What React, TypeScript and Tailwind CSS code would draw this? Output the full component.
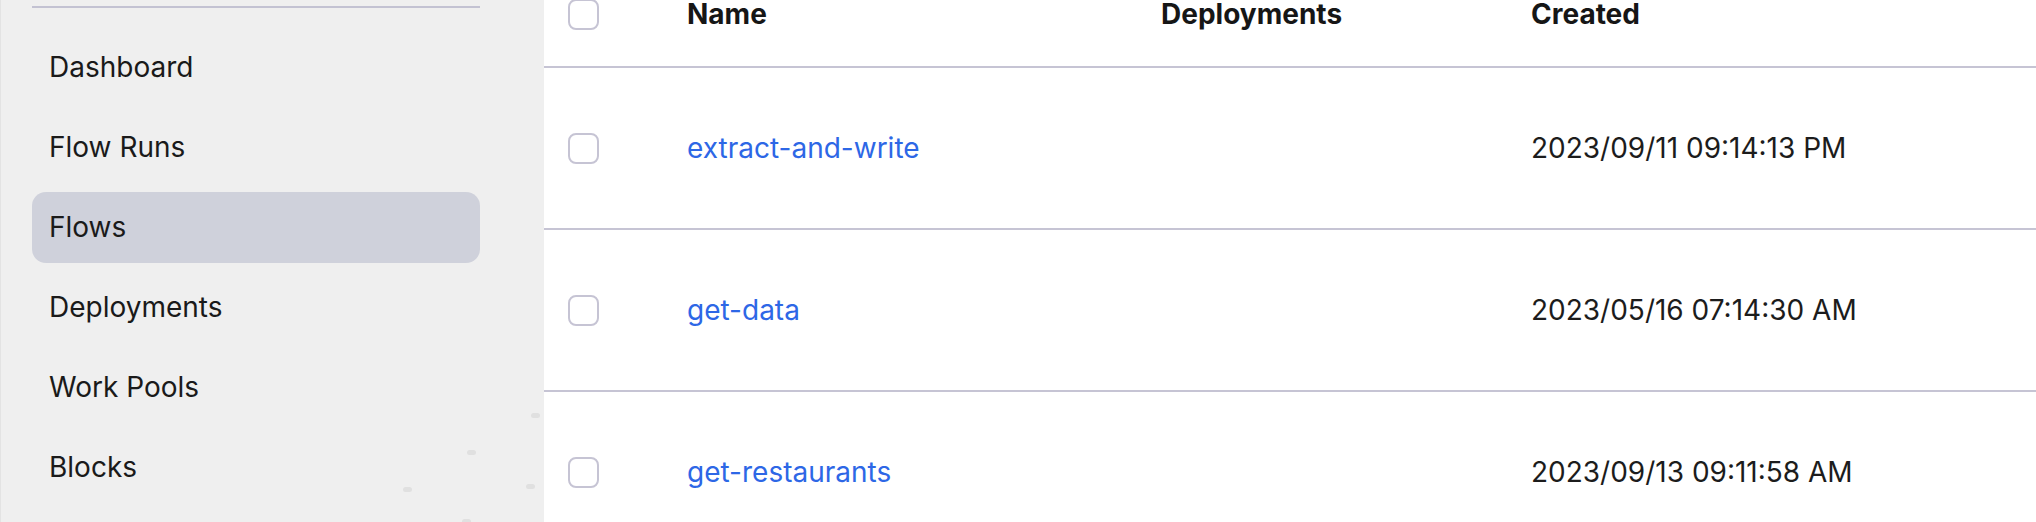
import React from "react";

const navItems = ["Dashboard", "Flow Runs", "Flows", "Deployments", "Work Pools", "Blocks"];

const rows = [
  { name: "extract-and-write", created: "2023/09/11 09:14:13 PM" },
  { name: "get-data", created: "2023/05/16 07:14:30 AM" },
  { name: "get-restaurants", created: "2023/09/13 09:11:58 AM" },
];

const dots = [
  { x: 530, y: 413 },
  { x: 466, y: 450 },
  { x: 402, y: 487 },
  { x: 525, y: 484 },
  { x: 461, y: 519 },
];

function Checkbox() {
  return <div className="w-[31px] h-[31px] rounded-[8px] border-2 border-[#c6c4d4] bg-white shrink-0" />;
}

export default function App() {
  return (
    <div
      className="flex w-[2036px] h-[522px] overflow-hidden bg-white text-[#1a1a1a]"
      style={{ fontFamily: "Inter, 'Noto Sans', sans-serif" }}
    >
      <aside className="relative w-[544px] shrink-0 h-full bg-[#efefef] border-l border-[#e3e3e3] pl-[31px] pr-[64px] pt-[6px]">
        <div className="h-[1.5px] bg-[#c3c2d2]" />
        <nav className="mt-[24px] flex flex-col gap-[9px]">
          {navItems.map((item) => (
            <div
              key={item}
              className={`h-[71px] flex items-center pl-[17px] rounded-[14px] text-[28px] ${
                item === "Flows" ? "bg-[#cfd1db]" : ""
              }`}
            >
              {item}
            </div>
          ))}
        </nav>
        {dots.map((d, i) => (
          <div
            key={i}
            className="absolute w-[9px] h-[5px] rounded-full bg-[#e0e0e0]"
            style={{ left: d.x, top: d.y }}
          />
        ))}
      </aside>
      <main className="flex-1 flex flex-col">
        <div className="grid grid-cols-[143px_474px_370px_1fr] h-[68px] shrink-0 border-b-2 border-[#c6c4d4] items-start">
          <div className="pl-[24px] -mt-[1px]">
            <Checkbox />
          </div>
          <div className="text-[28px] font-bold leading-[28px] text-[#161616]">Name</div>
          <div className="text-[28px] font-bold leading-[28px] text-[#161616]">Deployments</div>
          <div className="text-[28px] font-bold leading-[28px] text-[#161616]">Created</div>
        </div>
        {rows.map((r) => (
          <div
            key={r.name}
            className="grid grid-cols-[143px_474px_370px_1fr] h-[162px] shrink-0 border-b-2 border-[#c6c4d4] items-center"
          >
            <div className="pl-[24px]">
              <Checkbox />
            </div>
            <div className="text-[28px] text-[#2d67e6]">{r.name}</div>
            <div />
            <div className="text-[28px] text-[#1c1c1c]">{r.created}</div>
          </div>
        ))}
      </main>
    </div>
  );
}
